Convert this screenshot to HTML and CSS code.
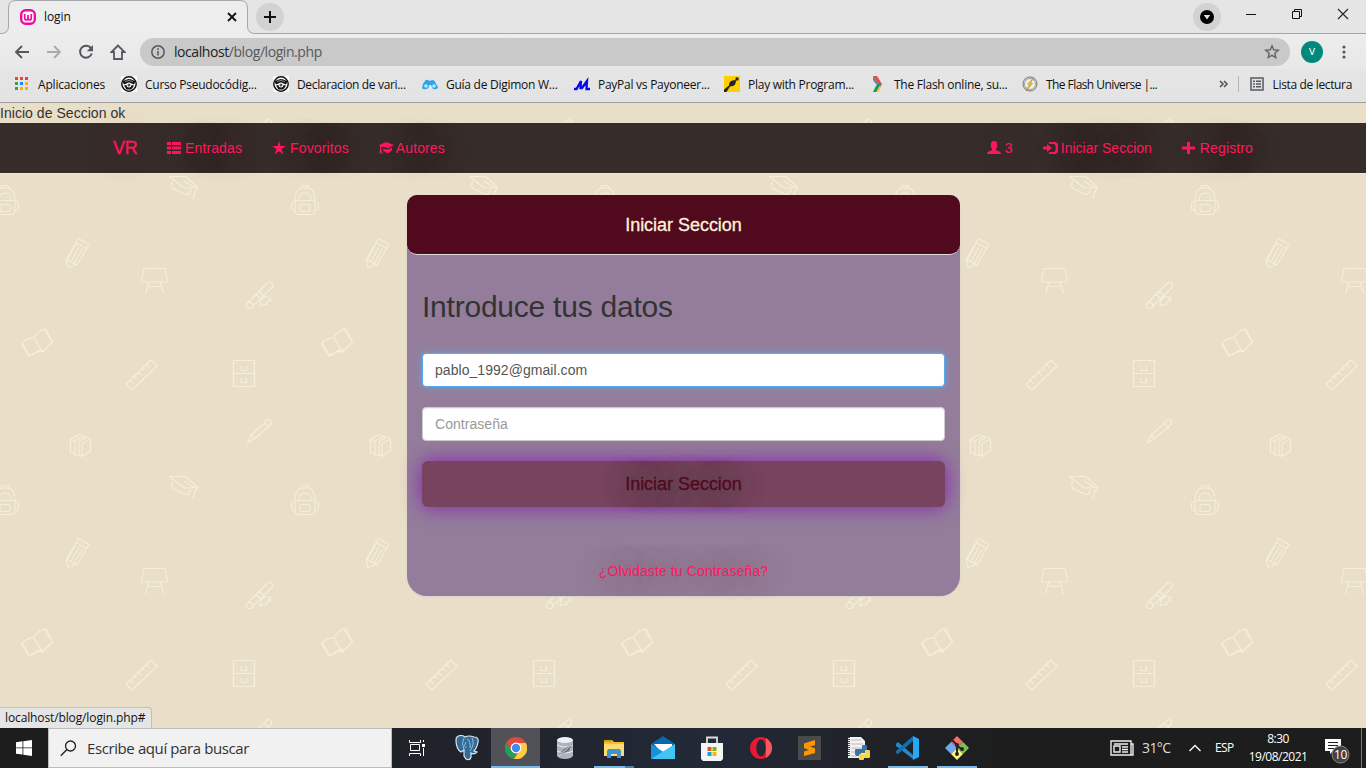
FILE: index.html
```html
<!DOCTYPE html>
<html lang="es">
<head>
<meta charset="utf-8">
<title>login</title>
<link rel="stylesheet" href="styles.css">
</head>
<body>
<svg width="0" height="0" class="defs">
  <symbol id="student" viewBox="0 0 16 16"><path fill="#fff" d="M0 0h16v16H0z"/><circle cx="8" cy="8" r="7.200" fill="#fff" stroke="#111" stroke-width="1.500"/><path d="M1.500 5.500Q8 .5 14.500 5.500L13 8.500 10.500 7.500Q8 5.500 5.500 7.500L3 8.500ZM3 9.500l2.500-.5Q5.500 11.500 8 11.500T10.500 9l2.500.5-2.500 4h-5Z" fill="#111"/><path d="M4 5.500Q8 3.500 12 5.500" fill="none" stroke="#aaa" stroke-width=".8"/><circle cx="8" cy="9" r="1.500" fill="#555"/></symbol>
</svg>
<div class="browser">
  <div class="tabstrip">
    <svg class="tab-shape" width="1366" height="34" viewBox="0 0 1366 34"><path d="M0 33.5H1Q8.500 33.500 8.500 26V8Q8.500 .5 16 .5H240Q247.500 .5 247.500 8V26Q247.500 33.500 255 33.500H1366V40H0Z" fill="#ededed" stroke="#a5a5a7"/></svg>
    <div class="tab">
      <svg width="16" height="16" viewBox="0 0 16 16"><rect x="1.200" y="1.200" width="13.600" height="13.600" rx="4.500" fill="#fff" stroke="#f10aa0" stroke-width="2.400"/><path d="M4.700 5v3.500Q4.700 11 6.300 11 8 11 8 8.500V6v2.500Q8 11 9.700 11 11.300 11 11.300 8.500V5" fill="none" stroke="#f10aa0" stroke-width="1.700"/></svg>
      <span class="tab-title">login</span>
      <svg width="10" height="10" viewBox="0 0 10 10"><path d="M1 1l8 8M9 1L1 9" stroke="#111" stroke-width="1.800"/></svg>
    </div>
    <div class="round newtab"><svg width="12" height="12" viewBox="0 0 12 12"><path d="M6 0v12M0 6h12" stroke="#111" stroke-width="2"/></svg></div>
    <div class="round profile-menu"><svg width="14" height="14" viewBox="0 0 14 14"><circle cx="7" cy="7" r="7"/><path d="M3.800 5h6.400L7 9.500z" fill="#e2e2e2"/></svg></div>
    <div class="window-buttons">
      <svg width="12" height="12" viewBox="0 0 12 12"><path d="M1 6.500h10" stroke="#111"/></svg>
      <svg width="12" height="12" viewBox="0 0 12 12"><path d="M1.500 3.500h7v7h-7zM3.500 3.500v-2h7v7h-2" fill="none" stroke="#111"/></svg>
      <svg width="12" height="12" viewBox="0 0 12 12"><path d="M1 1l10 10M11 1L1 11" stroke="#222" stroke-width="1.100"/></svg>
    </div>
  </div>
  <div class="toolbar">
    <svg width="16" height="16" viewBox="0 0 16 16"><path d="M8 2L2 8l6 6M2 8h13" fill="none" stroke="#55595e" stroke-width="1.900"/></svg>
    <svg width="16" height="16" viewBox="0 0 16 16"><path d="M8 2l6 6-6 6M14 8H1" fill="none" stroke="#ababad" stroke-width="1.900"/></svg>
    <svg width="16" height="16" viewBox="0 0 16 16"><path d="M13 4.200A6 6 0 1 0 13.800 9.500" fill="none" stroke="#55595e" stroke-width="2"/><path d="M15 1v6.200H8.800z" fill="#55595e"/></svg>
    <svg width="16" height="16" viewBox="0 0 16 16"><path d="M8 1.500L1.500 8H4v7h8V8h2.500z" fill="none" stroke="#55595e" stroke-width="1.800"/></svg>
    <div class="address">
      <svg width="14" height="14" viewBox="0 0 14 14"><circle cx="7" cy="7" r="6.200" fill="none" stroke="#55595e" stroke-width="1.500"/><path d="M7 6v4.500M7 3.300V5" stroke="#55595e" stroke-width="1.500"/></svg>
      <span class="url"><b>localhost</b>/blog/login.php</span>
      <svg width="16" height="16" viewBox="0 0 16 16"><path d="M8 1.800l1.700 4 4.600.4-3.500 3 1 4.400L8 11.300l-3.800 2.300 1-4.400-3.500-3 4.600-.4z" fill="none" stroke="#606468" stroke-width="1.400"/></svg>
    </div>
    <div class="avatar">v</div>
    <svg class="dots" width="4" height="14" viewBox="0 0 4 14" fill="#55595e"><circle cx="2" cy="2" r="1.600"/><circle cx="2" cy="7" r="1.600"/><circle cx="2" cy="12" r="1.600"/></svg>
  </div>
  <div class="bookmarks">
    <div class="bm bm-apps"><svg width="16" height="16" viewBox="0 0 16 16"><path fill="#ea4335" d="M0 1h3v3H0zm5 0h3v3H5zm5 0h3v3h-3z"/><path fill="#34a055" d="M0 6h3v3H0zm0 5h3v3H0z"/><path fill="#2684f5" d="M5 6h3v3H5z"/><path fill="#f7b108" d="M10 6h3v3h-3zm-5 5h3v3H5zm5 0h3v3h-3z"/></svg><span>Aplicaciones</span></div>
    <div class="bm bm-wide"><svg width="16" height="16"><use href="#student"/></svg><span>Curso Pseudocódig...</span></div>
    <div class="bm bm-declare"><svg width="16" height="16"><use href="#student"/></svg><span>Declaracion de vari...</span></div>
    <div class="bm bm-wide"><svg width="16" height="16" viewBox="0 0 16 16"><path d="M0 12Q0 8 3 5q1-2 3-1l2 1 2-1q3 0 4 4 2 2 2 4-2 2-5 1L9 9H7q0 4-3 4-3 1-4-1z" fill="#30a4e8"/><circle cx="4" cy="10" r="1.800" fill="#b9e9ff"/><circle cx="12" cy="10" r="1.800" fill="#b9e9ff"/></svg><span>Guía de Digimon W...</span></div>
    <div class="bm"><svg width="16" height="16" viewBox="0 0 16 16"><path d="M0 13h2.500L7 5 6.500 12H8l5-7-.5 8H16" fill="none" stroke="#0909ef" stroke-width="2.300"/></svg><span>PayPal vs Payoneer...</span></div>
    <div class="bm bm-play"><svg width="16" height="16" viewBox="0 0 16 16"><path fill="#ffd000" d="M0 0h16v16H0z"/><path d="M0 13.500L5 9.500Q5 5 8.500 4.500L12 4Q12 9 9 10L6 10.500 2.500 16H0z" fill="#242424"/><circle cx="13" cy="3" r="1.700" fill="#242424"/></svg><span>Play with Program...</span></div>
    <div class="bm bm-wide"><svg width="16" height="16" viewBox="0 0 16 16"><path d="M3 0h4l5 8H8z" fill="#e94c43"/><path d="M3 0l5 8H6L3 4zM12 8l-4 7-1-3 2-4z" fill="#4781c3"/><path d="M3 16l4-8h3L6.500 16z" fill="#159963"/><path d="M6.500 16l3-6h2L8.500 16z" fill="#f5c241"/></svg><span>The Flash online, su...</span></div>
    <div class="bm bm-last"><svg width="16" height="16" viewBox="0 0 16 16"><circle cx="8" cy="8" r="7" fill="#ddd" stroke="#777"/><circle cx="8" cy="8" r="5.500" fill="#eee" stroke="#888" stroke-width=".7"/><path d="M12 1.500L5.500 8l2 .5L4 15l6.500-7.500-2-.5z" fill="#f8c300" stroke="#907000" stroke-width=".4"/></svg><span>The Flash Universe |...</span></div>
    <svg class="more" width="10" height="8" viewBox="0 0 10 8"><path d="M1 1l3 3-3 3M5 1l3 3-3 3" fill="none" stroke="#55595e" stroke-width="1.700"/></svg>
    <div class="reading"><svg width="14" height="14" viewBox="0 0 14 14"><path d="M1 1h12v12H1z" fill="none" stroke="#55595e" stroke-width="1.500"/><path d="M3 4.300h2m1 0h5M3 7h2m1 0h5M3 9.700h2m1 0h5" stroke="#55595e" stroke-width="1.400"/></svg><span>Lista de lectura</span></div>
  </div>
</div>

<main class="page">
  <svg class="pattern" width="1366" height="625" viewBox="0 103 1366 625">
    <defs><pattern id="school" patternUnits="userSpaceOnUse" x="-10" y="170" width="300" height="300">
      <g transform="translate(10 -170)" fill="none" stroke="#f6eed8" stroke-width="1.150" stroke-linejoin="round">
        <path d="M1.500 188v-1q0-1.500 2-1.500h3q2 0 2 1.500v1M-5 210v-9q0-13 8-13h4q8 0 8 13v9q0 4-3 4.500H-2q-3-.5-3-4.500zM-5 200.500H15M-1 200q0-7 6-7t6 7M2 204.500H8q2 0 2 2v3q0 2-2 2H2q-2 0-2-2v-3q0-2 2-2zM-5 202h-2q-1.500 0-1.500 2v4q0 2 1.500 2h2M15 202h2q1.500 0 1.500 2v4q0 2-1.500 2h-2"/>
        <path d="M169.500 176.500h16l12.500 11-14 .5zM172.500 181q-2 5 1 8l12 5.500q5 0 5-6M184 181l13 8q-4 4-3 8l-2 1 2-1"/>
        <path d="M78.500 238.500L89 244.500 77 265 66.500 259zM76 242.500l10.500 6M75.500 245L67.500 259M79 247l-8 14.500M82.500 249l-8.500 14.500M66 259l2 8.500 8-3"/>
        <path d="M144 268.500h21l2.500 12-1 1.500h-24l-1-1.500zM149 282l-3.500 11.500M149 286.500h11M160 282l3.500 11.500"/>
        <circle cx="249.500" cy="305.500" r="3.200"/><path d="M247.500 303l20-20q2-2 4 0t1 4l-20.500 20M256 294l6 6M259 291l6 6M260 303.500l1-4 4-3 6 1-2 2 2 1-4.500 1.500v3l-2-1-4 2z"/>
        <path d="M22 342.500Q30 337 34 338q2-6 9.500-9l9 13-8 8q-6-1-10 3l-5 2.500zM34 338l8.500 14M23 342l-1.500 2L29 356l5-2q3-4 8-2 2 0 2-2M43 329h3l6 12"/>
        <path d="M151 360l6 6-25 24-6-6zM146.500 364.500l3 3M142.500 368.500l2 2M138.500 372.500l3 3M134.500 376.500l2 2M130.500 380.500l3 3"/>
        <path d="M233.500 360.500h21v26h-21zM233.500 373.500h21M241 366v4.500h5.500V366M241 378v4.500h5.500V378"/>
        <path d="M247.500 443l3-7L268 419.500q2 0 4 2l-1 3L254 439zM251 435l3 3M264 423l4 4M272 422l-5 7"/>
        <path d="M70.500 439.500L79 434.500 90.500 439v12L82 456.500l-3-2-4 1v-2l-4.500-.5zM70.500 439.500l4.500 2v12M75 441l9-5M79 454.500v-13l8-4.500M82 456.500v-13l8.500-4.500"/>
      </g>
    </pattern></defs>
    <rect y="103" width="1366" height="625" fill="url(#school)"/>
  </svg>
  <div class="message">Inicio de Seccion ok</div>
  <nav class="navbar">
    <div class="container">
      <a class="brand">VR</a>
      <a><svg width="14" height="14" viewBox="0 0 14 14"><path d="M0 1h4v3H0zm5 0h9v3H5zM0 5.500h4v3H0zm5 0h9v3H5zM0 10h4v3H0zm5 0h9v3H5z"/></svg> Entradas</a>
      <a><svg width="14" height="14" viewBox="0 0 14 14"><path d="M7 0l1.500 4.900H14L9.500 8l1.900 5.500L7 10.200l-4.400 3.300L4.500 8 0 4.900h5.500z"/></svg> Fovoritos</a>
      <a class="authors"><svg width="15" height="14" viewBox="0 0 15 14"><path d="M7.500 1L15 4 9.500 7.200 4 5.800 2 6.500 2.500 9.500 4 12.500H2.500L1.500 10.500 1 13H0l1-4V5L0 4zM4 7.500l3 .8h3l3-1.800v3l-3.500 2.500H8L4.500 10z"/></svg> Autores</a>
      <a class="right"><svg width="14" height="14" viewBox="0 0 14 14"><path d="M7 0Q10.500 0 10 4q1 1 0 2L9 8v1l3.500 1.500Q14 11 14 13H0q0-2 1.500-2.500L5 9V8L4 6Q3 5 4 4 3.500 0 7 0z"/></svg> 3</a>
      <a class="enter"><svg width="15" height="14" viewBox="0 0 15 14"><path d="M6 1h7l2 2v8l-2 2H6v-2h5l1.500-1.500v-5L11 3H6zM4 3L9 7l-5 4V8.500H0v-3h4z"/></svg> Iniciar Seccion</a>
      <a><svg width="14" height="14" viewBox="0 0 14 14"><path d="M5 1h3v4.500h5v3H8V13H5V8.500H0v-3h5z"/></svg> Registro</a>
    </div>
  </nav>
  <section class="panel">
    <header>Iniciar Seccion</header>
    <form>
      <h2>Introduce tus datos</h2>
      <input class="focused" type="text" value="pablo_1992@gmail.com">
      <input type="password" placeholder="Contraseña">
      <button type="button">Iniciar Seccion</button>
      <a class="forgot">¿Olvidaste tu Contraseña?</a>
    </form>
  </section>
  <div class="status">localhost/blog/login.php#</div>
</main>

<footer class="taskbar">
  <div class="start"><svg width="16" height="16" viewBox="0 0 16 16" fill="#fff"><path d="M0 2.200L6.500 1.300v6.200H0zM7.300 1.200L16 0v7.500H7.300zM0 8.300h6.500v6.300L0 13.700zM7.300 8.300H16V16l-8.700-1.200z"/></svg></div>
  <div class="search"><svg width="17" height="17" viewBox="0 0 17 17"><circle cx="10.500" cy="6" r="5" fill="none" stroke="#222" stroke-width="1.300"/><path d="M7 9.500L.8 15.800" stroke="#222" stroke-width="1.400"/></svg><span>Escribe aquí para buscar</span></div>
  <div class="taskview"><svg width="17" height="16" viewBox="0 0 17 16" fill="none" stroke="#fff"><path d="M.5 0v2.500h11V0M1.500 4.500h9v6h-9zM.5 16v-2.500h11V16M14.500 0v2M14.500 8v8"/><path d="M13 4h3v3h-3z" fill="#fff" stroke="none"/></svg></div>
  <div class="apps">
    <div><svg width="24" height="26" viewBox="0 0 24 26"><path d="M2 2Q6-1 10 2q4-2 9 0 5 0 4 5-1 6-4 9l3 1q-3 3-6 1v4q-1 4-5 2l-2-3v-6l-3 2Q1 14 1 5q0-2 1-3z" fill="#336b99" stroke="#dce9f1" stroke-width="1.200"/><path d="M9 3Q6 8 9 15M17 3q3 6-2 13M11 7q-3 4 0 6M12 4q4 2 3 9" fill="none" stroke="#b6cedf" stroke-width=".8"/></svg></div>
    <div class="active running"><svg width="22" height="22" viewBox="0 0 22 22"><circle cx="11" cy="11" r="11" fill="#e24a3b"/><path d="M1.500 5.500L6.500 14l4.500 3-2 5A11 11 0 0 1 1.500 5.500z" fill="#20a05a"/><path d="M11 6h9.800A11 11 0 0 1 9 22l6-9z" fill="#fcce42"/><circle cx="11" cy="11" r="5.400" fill="#fff"/><circle cx="11" cy="11" r="4.200" fill="#4689ed"/></svg></div>
    <div><svg width="18" height="22" viewBox="0 0 18 22"><path d="M1 3v16q2 3 8 3t8-3V3z" fill="#afb3bd"/><ellipse cx="9" cy="3" rx="8" ry="3" fill="#edf0f4"/><path d="M1 8q8 4 16 0M1 14q8 4 16 0" stroke="#ededf0" fill="none"/><path d="M3 18l5-6 8-5-3 7-5 2z" fill="#6f7378"/><path d="M3 19L15 8" stroke="#ddd"/></svg></div>
    <div class="running folder"><svg width="22" height="22" viewBox="0 0 22 22"><path d="M1 3h8l2 2h10v14H1z" fill="#f6bd32"/><path d="M1 7h20v12H1z" fill="#ffdc70"/><path d="M1 3h8v2H1z" fill="#d89b0a"/><path d="M4 21v-7l1-2h12l1 2v7h-4v-4H8v4z" fill="#3f94d4"/></svg></div>
    <div><svg width="24" height="24" viewBox="0 0 24 24"><path d="M0 8L12 0l12 8v15H0z" fill="#0868ac"/><path d="M3 8h18v4l-9 6z" fill="#fff"/><path d="M0 8l14 9L0 23z" fill="#1692dc"/><path d="M24 8L0 23h24z" fill="#42c5f3"/></svg></div>
    <div><svg width="22" height="25" viewBox="0 0 22 25"><path d="M6 7V1.500h10V7" fill="none" stroke="#ddd" stroke-width="1.800"/><path d="M0 7h22v16l-2 2H2l-2-2z" fill="#f5f5f5"/><path d="M6.500 11h4v4h-4z" fill="#e95024"/><path d="M11.500 11h4v4h-4z" fill="#7bb901"/><path d="M6.500 16h4v4h-4z" fill="#0aa5ed"/><path d="M11.500 16h4v4h-4z" fill="#ffb800"/></svg></div>
    <div><svg width="22" height="22" viewBox="0 0 22 22"><circle cx="11" cy="11" r="11" fill="#e71932"/><path d="M16 1Q22 5 22 11t-6 10Z" fill="#f8595d"/><ellipse cx="11" cy="11" rx="4.700" ry="8.500" fill="#222936"/></svg></div>
    <div><svg width="23" height="24" viewBox="0 0 23 24"><path d="M0 0h23v24H0z" fill="#4a4a4a"/><path d="M6 7.500L17 4v5l-5 1.700 5 1.500V17L6 20v-4.500l5-1.500-5-2z" fill="#ff9800"/></svg></div>
    <div><svg width="22" height="24" viewBox="0 0 22 24"><path d="M0 1h13l4 4v17H0z" fill="#f2f2f2"/><path d="M3 4h10M3 8h12M3 12h12M3 16h6M3 20h6" stroke="#bbb"/><path d="M1 1v20" stroke="#444" stroke-width="2" stroke-dasharray="1 1"/><path d="M8 18v-4h7v-4h3v6h-6v3H9z" fill="#3675a8" stroke="#3675a8" stroke-width="2" stroke-linejoin="round"/><path d="M12 23v-4h6v-4h3v6h-6v2z" fill="#ffd34d" stroke="#ffd34d" stroke-width="2" stroke-linejoin="round"/></svg></div>
    <div class="running"><svg width="23" height="24" viewBox="0 0 23 24"><path d="M0 8l2-2 15 13v4L0 10z" fill="#2489ca"/><path d="M0 15L17 0v5L2 18l-2-1z" fill="#1070b3"/><path d="M17 0l6 3v18l-6 3z" fill="#28a7f2"/></svg></div>
    <div class="running"><svg width="24" height="24" viewBox="0 0 24 24"><path d="M12 0l6 6-6 6-6-6z" fill="#f16d72"/><path d="M18 6l6 6-6 6-6-6z" fill="#80bd54"/><path d="M6 6l6 6-6 6-6-6z" fill="#70a9ed"/><path d="M12 12l6 6-6 6-6-6z" fill="#fff080"/><path d="M7 4l5 5v9M12 10l6 4" fill="none" stroke="#262626" stroke-width="2"/><circle cx="12" cy="9" r="2" fill="#262626"/><circle cx="12" cy="18" r="2" fill="#262626"/><circle cx="17" cy="13" r="2" fill="#262626"/></svg></div>
  </div>
  <div class="weather"><svg width="24" height="16" viewBox="0 0 24 16" fill="none" stroke="#eee" stroke-width="1.400"><path d="M21 1H1v14h20zM21 4h2v11h-2M4 6h6v6H4zM4 4h14M12 7h6M12 9.500h6M12 12h6"/></svg><span>31°C</span></div>
  <svg class="chevron" width="12" height="8" viewBox="0 0 12 8"><path d="M.5 7L6 1.500 11.500 7" fill="none" stroke="#fff" stroke-width="1.300"/></svg>
  <span class="lang">ESP</span>
  <div class="clock"><span>8:30</span><span>19/08/2021</span></div>
  <div class="notices"><svg width="26" height="26" viewBox="0 0 26 26"><path d="M0 1h16v12H8l-3 3v-3H0z" fill="#fff"/><path d="M3 4.500h10M3 7.500h10M3 10.500h6" stroke="#222"/><circle cx="15.500" cy="16.500" r="8.500" fill="#424242" stroke="#888"/></svg><span>10</span></div>
</footer>
</body>
</html>
```
FILE: styles.css
```css
* { box-sizing: border-box; }
body { margin: 0; width: 1366px; height: 768px; overflow: hidden; font: 14px/20px "Liberation Sans", Arial, sans-serif; color: #333; }
svg { display: block; flex: none; }
.defs { position: absolute; }
.browser { height: 103px; background: linear-gradient(#e9e9e9, #e3e3e3); border-bottom: 1px solid #9e9e9e; font: 12px/16px "Open Sans", "Noto Sans", sans-serif; color: #111; }
.tabstrip { height: 34px; position: relative; display: flex; align-items: flex-start; background: #e5e5e5; }
.tab-shape { position: absolute; left: 0; top: 0; }
.tab { position: relative; width: 248px; height: 34px; padding: 0 11px 0 20px; display: flex; align-items: center; gap: 8px; }
.tab-title { flex: 1; letter-spacing: -.1px; }
.round { position: relative; width: 28px; height: 28px; border-radius: 50%; background: #d2d2d2; display: flex; align-items: center; justify-content: center; margin-top: 3px; }
.newtab { margin-left: 8px; }
.profile-menu { margin-left: 909px; }
.window-buttons { position: relative; display: flex; gap: 34px; padding: 8px 0 0 24px; }
.toolbar { height: 35px; background: linear-gradient(#ededed, #e8e8e8); display: flex; align-items: center; gap: 16px; padding: 1px 20px 0 14px; }
.address { flex: 1; height: 28px; border-radius: 14px; background: #c9c9c9; margin-left: -2px; margin-right: -6px; display: flex; align-items: center; padding: 0 10px 0 11px; gap: 9px; }
.url { flex: 1; font-size: 14px; letter-spacing: -.43px; color: #55585c; }
.url b { font-weight: normal; color: #202124; }
.avatar { width: 22px; height: 22px; border-radius: 50%; background: #00897b; color: #fff; text-align: center; line-height: 20px; font-size: 12px; margin: 0 3px 0 1px; }
.bookmarks { height: 33px; display: flex; align-items: center; padding: 0 14px 3px 15px; letter-spacing: -.26px; white-space: nowrap; }
.bm { width: 150px; display: flex; gap: 8px; align-items: center; }
.bm span, .reading span { padding-top: 1px; }
.bm-apps { width: 106px; gap: 7px; letter-spacing: -.18px; }
.bm-wide { width: 152px; }
.bm-declare { width: 149px; letter-spacing: -.34px; }
.bm-play { width: 146px; }
.bm-last { letter-spacing: -.57px; }
.more { margin-left: auto; margin-right: 9px; }
.reading { border-left: 1px solid #b5b5b5; height: 16px; padding-left: 11px; display: flex; gap: 9px; align-items: center; letter-spacing: -.35px; }
.page { position: relative; height: 625px; background: #e9dec7; overflow: hidden; }
.pattern { position: absolute; left: 0; top: 0; }
.message { position: relative; height: 20px; white-space: nowrap; letter-spacing: .04px; }
.navbar { position: relative; height: 51px; background: rgba(46, 36, 35, .96); border-bottom: 1px solid #e7e7e7; }
.container { width: 1170px; height: 50px; margin: 0 auto; display: flex; align-items: center; color: #ff175f; }
.container a { display: flex; gap: 4px; padding: 0 15px; align-items: center; white-space: nowrap; letter-spacing: .13px; text-shadow: 0 0 30px #a0101088; }
.container a svg { fill: #ff175f; }
.container .brand { font-size: 18px; width: 54px; letter-spacing: -.3px; -webkit-text-stroke: .3px; }
.container .authors { gap: 2px; letter-spacing: .1px; }
.container .right { margin-left: auto; }
.container .enter { gap: 3px; letter-spacing: 0; }
.panel { position: relative; width: 553px; height: 401px; margin: 21px auto 0 407px; background: #937d9a; border-radius: 10px 10px 20px 20px; box-shadow: 0 1px 2px #d3d2d5; }
.panel header { height: 60px; border-radius: 10px; border-bottom: 1px solid #ddd; background: #51091e; color: #fff2d8; font-size: 18px; display: flex; align-items: center; justify-content: center; letter-spacing: -.03px; -webkit-text-stroke: .3px; }
.panel form { padding: 34px 15px 0; display: flex; flex-direction: column; }
h2 { font-size: 30px; line-height: 36px; font-weight: normal; margin: 0 0 28px; letter-spacing: -.23px; }
input { height: 34px; margin: 0 0 20px; padding: 6px 12px; font: 14px "Liberation Sans", Arial, sans-serif; letter-spacing: .05px; color: #555; background: #fff; border: 1px solid #ccc; border-radius: 4px; box-shadow: inset 0 1px 1px #0001; }
input.focused { border-color: #55a9ed; box-shadow: 0 0 8px #66afe9aa; }
input::placeholder { color: #999; opacity: 1; }
button { height: 46px; border: 0; border-radius: 6px; background: #77435e; box-shadow: 0 0 20px #8721af; color: #51091e; font: 18px "Liberation Sans", Arial, sans-serif; letter-spacing: -.03px; text-shadow: 0 0 22px #405c48, 0 0 26px #4a665088; -webkit-text-stroke: .3px; }
.forgot { align-self: center; margin-top: 54px; color: #ff175f; letter-spacing: .12px; text-shadow: 0 0 26px #b5204499; }
.status { position: absolute; left: 0; bottom: 0; width: 152px; height: 21px; padding: 2px 5px; background: #e5e5e5; border: 1px solid #c8bfad; border-left: 0; border-bottom: 0; border-radius: 0 4px 0 0; font: 12px/16px "Open Sans", sans-serif; color: #111; letter-spacing: -.12px; white-space: nowrap; }
.taskbar { height: 40px; display: flex; align-items: center; background: linear-gradient(90deg, #1d1d1d, #20232a 34%, #222937 52%, #20232a 62%, #1d1d1d 74%, #1d1d1d); color: #fff; font: 12px/16px "Open Sans", sans-serif; }
.start { width: 48px; display: flex; justify-content: center; }
.search { width: 344px; height: 40px; border: 1px solid #bababa; background: #f1f1f1; display: flex; align-items: center; gap: 10px; padding-left: 11px; color: #333; font-size: 15px; letter-spacing: -.4px; }
.taskview { width: 50px; display: flex; justify-content: center; }
.apps { display: flex; height: 40px; width: 668px; }
.apps div { width: 49px; height: 40px; display: flex; align-items: center; justify-content: center; background: linear-gradient(#76b9ed, #76b9ed) center bottom / 0 2px no-repeat; }
.apps .running { background-size: 40px 2px; }
.apps .active { background-color: #505257; background-size: 49px 2px; }
.apps .folder { background: linear-gradient(90deg, #76b9ed 77%, #517ca6 77%) center bottom / 40px 2px no-repeat; }
.weather { display: flex; align-items: center; gap: 8px; width: 79px; font-size: 14px; letter-spacing: -.6px; color: #ddd; }
.chevron { margin-right: 14px; }
.lang { width: 34px; letter-spacing: -.6px; }
.clock { width: 58px; display: flex; flex-direction: column; align-items: center; line-height: 18px; letter-spacing: -.5px; }
.notices { position: relative; margin-left: 18px; width: 37px; height: 40px; padding-top: 10px; border-right: 1px solid #777; }
.notices span { position: absolute; left: 9px; top: 19px; letter-spacing: -.3px; }
```
